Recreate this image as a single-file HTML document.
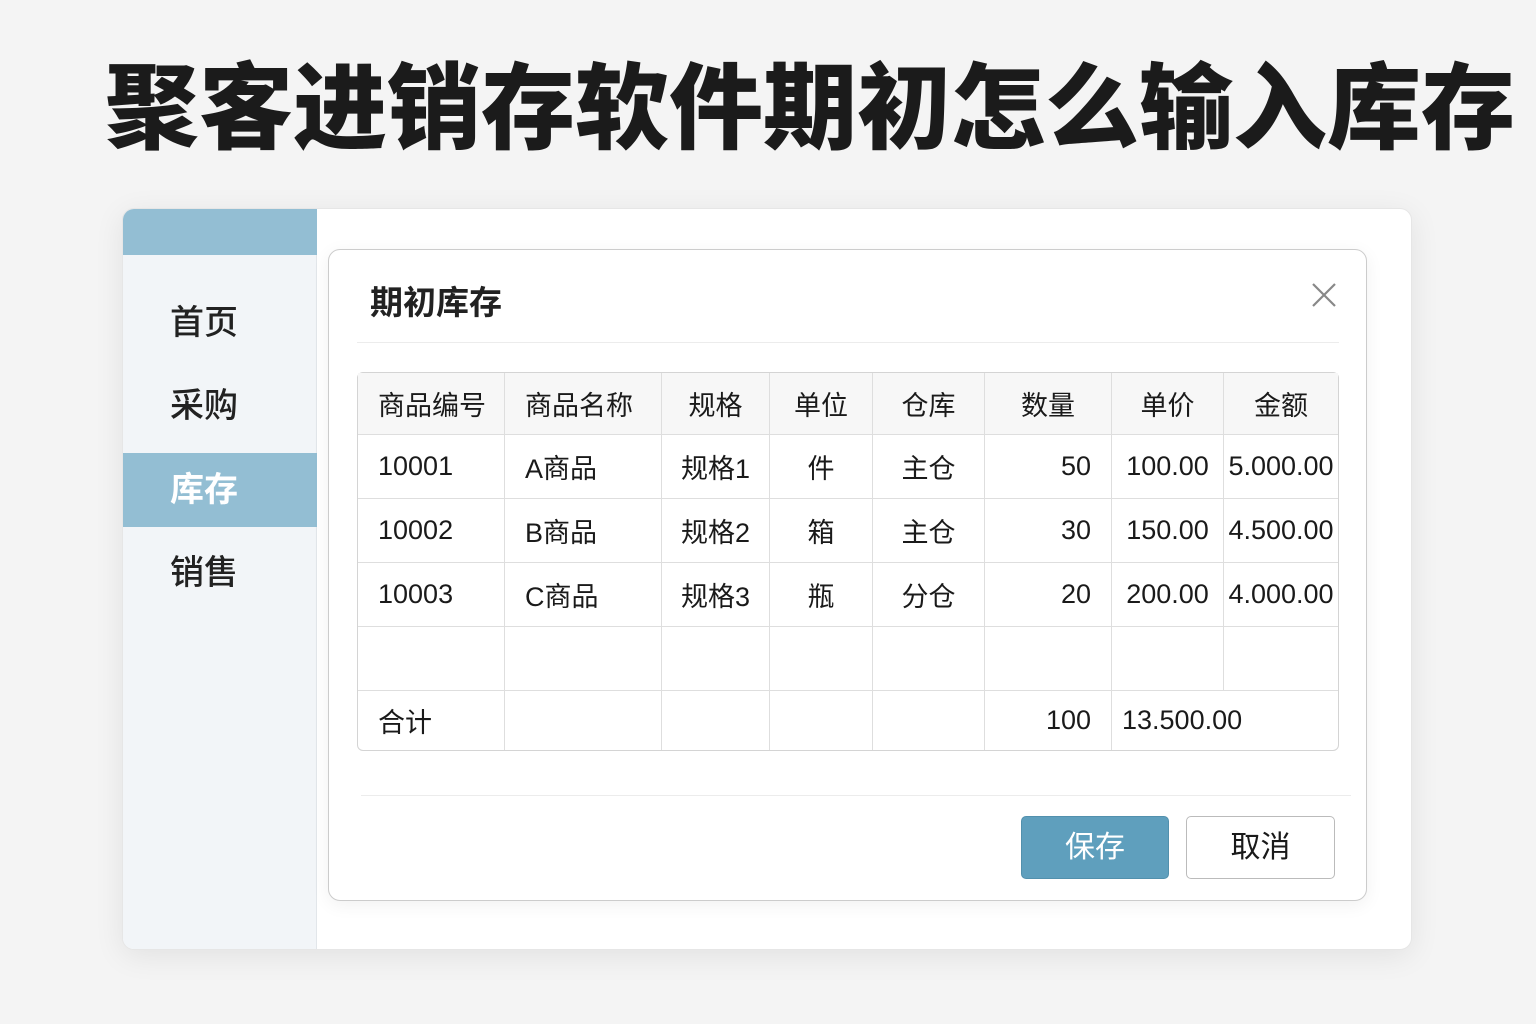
<!DOCTYPE html>
<html><head><meta charset="utf-8"><style>
*{margin:0;padding:0;box-sizing:border-box}
body{width:1536px;height:1024px;background:#f4f4f4;position:relative;overflow:hidden;font-family:"Liberation Sans","Noto Sans CJK SC",sans-serif;color:#1a1a1a}
.h1{position:absolute;left:105px;top:54px;font-size:94px;font-weight:900;letter-spacing:0px;white-space:nowrap;color:#1b1b1b;line-height:110px}
.card{position:absolute;left:122px;top:208px;width:1290px;height:742px;background:#fff;border-radius:12px;box-shadow:0 6px 30px rgba(0,0,0,.08);border:1px solid #e6e6e6;overflow:hidden}
.side{position:absolute;left:0;top:0;width:194px;height:742px;background:#f2f5f8;border-right:1px solid #e2e6ea}
.sidehead{position:absolute;left:0;top:0;width:194px;height:46px;background:#93bed3}
.nav{position:absolute;left:47px;font-size:34px;color:#222;line-height:40px;font-weight:500}
.active{position:absolute;left:0;top:244px;width:194px;height:74px;background:#93bed3}
.dlg{position:absolute;left:328px;top:249px;width:1039px;height:652px;background:#fff;border:1.5px solid #ccc;border-radius:12px;box-shadow:0 4px 18px rgba(0,0,0,.06)}
.title{position:absolute;left:41px;top:26px;font-size:33px;font-weight:bold;color:#222}
.close{position:absolute;left:982px;top:32px;width:26px;height:26px}
.line{position:absolute;height:1px;background:#ececec}
table{position:absolute;left:28px;top:122px;border-collapse:separate;border-spacing:0;table-layout:fixed;border:1.5px solid #d4d4d4;border-radius:6px;font-size:27px;color:#1a1a1a}
td{border-right:1px solid #dedede;border-bottom:1px solid #dedede;height:64px;white-space:nowrap;overflow:hidden}
td:last-child{border-right:none}
tr.hd td{background:#f7f7f7;height:62px}
tr:last-child td{border-bottom:none;height:59px}
.l{text-align:left;padding-left:20px}.c{text-align:center}.r{text-align:right;padding-right:20px}
.btn{position:absolute;top:566px;height:63px;border-radius:5px;font-size:30px;text-align:center;line-height:61px}
</style></head><body>
<div class="h1">聚客进销存软件期初怎么输入库存</div>
<div class="card">
 <div class="side">
  <div class="sidehead"></div>
  <div class="active"></div>
  <div class="nav" style="top:94px">首页</div>
  <div class="nav" style="top:177px">采购</div>
  <div class="nav" style="top:261px;color:#fff;font-weight:bold">库存</div>
  <div class="nav" style="top:344px">销售</div>
 </div>
</div>
<div class="dlg">
 <div class="title">期初库存</div>
 <svg class="close" viewBox="0 0 26 26"><path d="M2 2L24 24M24 2L2 24" stroke="#888" stroke-width="2.2"/></svg>
 <div class="line" style="left:28px;top:92px;width:982px"></div>
 <table>
  <colgroup><col style="width:147px"><col style="width:157px"><col style="width:108px"><col style="width:103px"><col style="width:112px"><col style="width:127px"><col style="width:112px"><col style="width:114px"></colgroup>
  <tr class="hd"><td class="l">商品编号</td><td class="l">商品名称</td><td class="c">规格</td><td class="c">单位</td><td class="c">仓库</td><td class="c">数量</td><td class="c">单价</td><td class="c">金额</td></tr>
  <tr><td class="l">10001</td><td class="l">A商品</td><td class="c">规格1</td><td class="c">件</td><td class="c">主仓</td><td class="r">50</td><td class="c">100.00</td><td class="c">5.000.00</td></tr>
  <tr><td class="l">10002</td><td class="l">B商品</td><td class="c">规格2</td><td class="c">箱</td><td class="c">主仓</td><td class="r">30</td><td class="c">150.00</td><td class="c">4.500.00</td></tr>
  <tr><td class="l">10003</td><td class="l">C商品</td><td class="c">规格3</td><td class="c">瓶</td><td class="c">分仓</td><td class="r">20</td><td class="c">200.00</td><td class="c">4.000.00</td></tr>
  <tr><td></td><td></td><td></td><td></td><td></td><td></td><td></td><td></td></tr>
  <tr><td class="l">合计</td><td></td><td></td><td></td><td></td><td class="r">100</td><td colspan="2" style="padding-left:10px">13.500.00</td></tr>
 </table>
 <div class="line" style="left:32px;top:545px;width:990px"></div>
 <div class="btn" style="left:692px;width:148px;background:#5f9fbd;color:#fff;border:1px solid #5290ad">保存</div>
 <div class="btn" style="left:857px;width:149px;background:#fff;color:#1a1a1a;border:1.5px solid #bbb">取消</div>
</div>
</body></html>
